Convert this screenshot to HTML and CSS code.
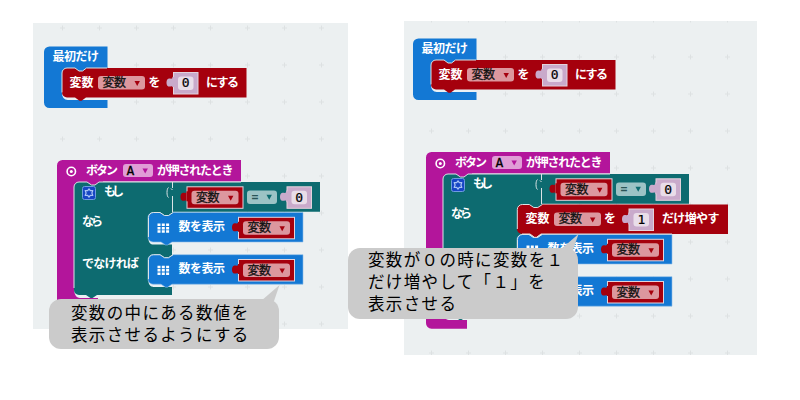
FILE: index.html
```
<!DOCTYPE html>
<html lang="ja">
<head>
<meta charset="utf-8">
<title>micro:bit ブロック</title>
<link rel="stylesheet" href="styles.css">
</head>
<body>
<main class="board">
  <section class="panel panel-before">
    <svg class="canvas" width="315" height="306" viewBox="33 23 315 306">
      <defs>
        <pattern id="grid" x="7" y="9.5" width="37" height="37" patternUnits="userSpaceOnUse">
          <path d="M16 18.500h5M18.500 16v5" class="cross"/>
        </pattern>
        <path id="arrow" d="M0 .5h5.400l-2.700 5z"/>
        <g id="plug"><path d="M7 4v12H6.500c0-3-2-1.500-4-1.500C.5 14.500 0 12 0 10.500S.5 6.500 2.500 6.500c2 0 4 1 4-2.500z"/></g>
        <g id="number">
          <use href="#plug" x="0" y="0" class="lilac"/>
          <rect x="7" y=".5" width="24.500" height="21.500" class="lilac edge"/>
          <rect x="6" y="5" width="2" height="10" class="lilac"/>
          <rect x="11.500" y="4.500" width="15.500" height="13.500" rx="3" class="numfield"/>
        </g>
        <g id="variable">
          <use href="#plug" class="red"/>
          <rect x="6.500" y=".5" width="56" height="21.500" class="red edge"/>
          <rect x="6" y="5" width="2" height="10" class="red"/>
          <rect x="11" y="4.500" width="47" height="13.500" rx="3" class="redfield"/>
          <text x="15.500" y="15.500" textLength="23.500" class="dark">変数</text>
          <use href="#arrow" x="47.500" y="9" class="redmark"/>
        </g>
        <g id="show">
          <path d="M148.500 219v20c0 3.500 2 5.500 5 5.500h18.500v-3z" class="light"/>
          <path d="M153 212.500h7l4.500 3h4l4.500-3H303V242H172l-4.500 3h-2l-4.500-3h-8a5 5 0 0 1-5-5v-19.500a5 5 0 0 1 5-5z" class="blue edgeblue"/>
          <path d="M148.500 237v-19.500a5 5 0 0 1 5-5h6.500l4.500 3h4l4.500-3" class="shine"/>
          <path d="M157.500 223.500h3v2.500h-3zm4.300 0h3v2.500h-3zm4.300 0h3v2.500h-3zm-8.600 3.400h3v2.500h-3zm4.300 0h3v2.500h-3zm4.300 0h3v2.500h-3zm-8.600 3.400h3v2.500h-3zm4.300 0h3v2.500h-3zm4.300 0h3v2.500h-3z" class="white"/>
          <text x="178.500" y="231" textLength="46.500">数を表示</text>
          <use href="#variable" x="232" y="216.800"/>
        </g>
        <g id="start">
          <path d="M64 95v5.500h43.500V96z" class="light"/>
          <path d="M49.500 46.500h58V74H66v21c0 3 1 5 4 5h37.500v8h-58a5.500 5.500 0 0 1-5.500-5.500V52a5.500 5.500 0 0 1 5.500-5.500z" class="blue"/>
          <text x="52.500" y="61" textLength="46.500">最初だけ</text>
          <path d="M62 73v20c0 4 2 7 6 7h39.500v-4z" class="light"/>
          <path d="M67 68h8l4 3h3.500l4-3H246.500v29.500H86l-4.500 3.300h-2L75 97.500h-8a5 5 0 0 1-5-5V73a5 5 0 0 1 5-5z" class="red"/>
          <path d="M62 92.500V73a5 5 0 0 1 5-5h8l4 3h3.500l4-3H107" class="shine"/>
          <text x="69.500" y="87" textLength="24">変数</text>
          <rect x="98" y="76" width="47" height="13.500" rx="3" class="redfield"/>
          <text x="102.500" y="86.800" textLength="23.500" class="dark">変数</text>
          <use href="#arrow" x="134.500" y="80.500" class="redmark"/>
          <text x="148.500" y="87">を</text>
          <use href="#number" x="166.500" y="72"/>
          <text x="181.700" y="87.200" class="digit">0</text>
          <text x="206" y="87" textLength="33">にする</text>
        </g>
        <g id="head">
          <path d="M62.500 160H241v21.500H103V187H78V305H57V165.500a5.500 5.500 0 0 1 5.500-5.500z" class="magenta"/>
          <circle cx="71.300" cy="171.500" r="4.200" class="ring"/>
          <circle cx="71.300" cy="171.500" r="1.500" class="white"/>
          <text x="86" y="174.500" textLength="32">ボタン</text>
          <rect x="123" y="164" width="30" height="13" rx="3" class="pinkfield"/>
          <text x="126.500" y="174.800" class="letter">A</text>
          <use href="#arrow" x="142.500" y="168" class="magenta"/>
          <text x="157" y="174.500" textLength="76.500">が押されたとき</text>
        </g>
        <g id="condition">
          <path d="M74 288V187a5 5 0 0 1 5-5h8l4.500 3h3.500l4-3H241" class="shine"/>
          <rect x="82.500" y="186.500" width="13" height="13" rx="2" class="gearbox"/>
          <path d="M89 188.800l1.300 1.900 2.500-.2-.9 2.500.9 2.500-2.500-.2L89 197.200l-1.300-1.900-2.500.2.900-2.500-.9-2.500 2.500.2z" class="gear"/>
          <text x="104" y="196.300" textLength="20">もし</text>
          <path d="M168.500 187.500c-2 1-2 9 0 10M172.500 182v6M172.500 190l-1.500-1.500M172.500 196v16" class="shine"/>
          <use href="#variable" x="180.500" y="186.300"/>
          <rect x="247" y="190.500" width="30" height="13.500" rx="3" class="tealfield"/>
          <text x="251.500" y="201" class="operator">=</text>
          <use href="#arrow" x="266.500" y="194.200" class="teal"/>
          <use href="#number" x="280" y="186.300"/>
          <text x="295.300" y="201.500" class="digit">0</text>
          <text x="82" y="226" textLength="21">なら</text>
        </g>
      </defs>
      <rect x="33" y="23" width="315" height="306" fill="url(#grid)"/>
      <use href="#start"/>
      <use href="#head"/>
      <path d="M57 296h41v10.700H62.500A5.500 5.500 0 0 1 57 301z" class="magenta"/>
      <path d="M74 288c0 6 2 10 6 10h18v-4z" class="light"/>
      <path d="M79 182h8l4.500 3H95l4-3H320v29.700H173V217h-20V244h19v16h-19v27h19v8H97l-4.500 3h-2L86 295h-7a5 5 0 0 1-5-5V187a5 5 0 0 1 5-5z" class="teal"/>
      <use href="#condition"/>
      <text x="82" y="268" textLength="57">でなければ</text>
      <use href="#show"/>
      <use href="#show" y="42.200"/>
    </svg>
    <div class="callout callout-before">変数の中にある数値を<br>表示させるようにする
      <svg class="tail" width="20" height="16" viewBox="0 0 20 16"><path d="M0 16L18.500 0 13 16z"/></svg>
    </div>
  </section>

  <section class="panel panel-after">
    <svg class="canvas" width="353" height="334" viewBox="35 29 353 334">
      <rect x="35" y="29" width="353" height="334" fill="url(#grid)"/>
      <use href="#start"/>
      <use href="#head"/>
      <path d="M57 300h21v27h20v9.700H62.500A5.500 5.500 0 0 1 57 331z" class="magenta"/>
      <path d="M74 318c0 6 2 10 6 10h18v-4z" class="light"/>
      <path d="M79 182h8l4.500 3H95l4-3H320v29.700H173V217h-20V274h19v16h-19v27h19v8H97l-4.500 3h-2L86 325h-7a5 5 0 0 1-5-5V187a5 5 0 0 1 5-5z" class="teal"/>
      <use href="#condition"/>
      <use href="#show" y="30"/>
      <use href="#show" y="72.200"/>
      <path d="M153 212.500h7l4.500 3h4l4.500-3H359V242H172l-4.500 3.300h-2L161 242h-8a5 5 0 0 1-5-5v-19.500a5 5 0 0 1 5-5z" class="red"/>
      <path d="M148.300 237v-19.500a5 5 0 0 1 5-5h7l4.500 3h4l4.500-3M153 242h8l4.500 3.300h2l4.500-3.300H303" class="shine"/>
      <text x="156.500" y="231" textLength="24">変数</text>
      <rect x="185" y="220.500" width="47" height="13.500" rx="3" class="redfield"/>
      <text x="189.500" y="231.300" textLength="23.500" class="dark">変数</text>
      <use href="#arrow" x="221" y="225" class="redmark"/>
      <text x="235" y="231">を</text>
      <use href="#number" x="253" y="216.500"/>
      <text x="268.500" y="231.700" class="digit">1</text>
      <text x="293" y="231" textLength="57.500">だけ増やす</text>
    </svg>
    <div class="callout callout-after">変数が０の時に変数を１<br>だけ増やして「１」を<br>表示させる
      <svg class="tail" width="20" height="16" viewBox="0 0 20 16"><path d="M0 16L18.500 0 13 16z"/></svg>
    </div>
  </section>
</main>
</body>
</html>
```
FILE: styles.css
```
* { box-sizing: border-box; }
body {
  margin: 0;
  width: 800px;
  height: 400px;
  overflow: hidden;
  background: #fff;
  font-family: "Noto Sans CJK JP", sans-serif;
}
.board {
  display: flex;
  align-items: flex-start;
  gap: 56px;
  padding: 21px 0 0 33px;
}
.panel {
  position: relative;
  flex: none;
  background: #ecf0f1;
}
.panel-before { width: 315px; height: 306px; margin-top: 2px; }
.panel-after { width: 353px; height: 334px; }
.canvas { display: block; }
.canvas text {
  font-size: 12px;
  font-weight: 700;
  fill: #fff;
}
.canvas text.dark {
  fill: #111;
  font-weight: 400;
  stroke: #111;
  stroke-width: .3px;
}
.canvas text.digit {
  font-family: "DejaVu Sans Mono", monospace;
  font-size: 13px;
  font-weight: 400;
  fill: #000;
  stroke: #000;
  stroke-width: .2px;
}
.canvas text.letter {
  font-family: "DejaVu Sans Mono", monospace;
  font-size: 13px;
  font-weight: 400;
  fill: #000;
  stroke: #000;
  stroke-width: .3px;
}
.canvas text.operator {
  font-family: "DejaVu Sans Mono", monospace;
  font-size: 11.5px;
  font-weight: 700;
  fill: #2a5557;
}
.cross { stroke: #dde1e2; stroke-width: 1; fill: none; }
.blue { fill: #1378d4; }
.red { fill: #a5000d; }
.magenta { fill: #b3159b; }
.teal { fill: #0d6b70; }
.lilac { fill: #c9aacb; }
.white { fill: #fff; }
.light { fill: #eaf0f4; }
.edge { stroke: #e3d3dc; stroke-width: 1; }
.edgeblue { stroke: #8dbde8; stroke-width: .6; }
.shine { fill: none; stroke: #dce4e6; stroke-width: 1; }
.numfield { fill: #e9dde9; }
.redfield { fill: #dc979e; }
.redmark { fill: #a5000d; }
.pinkfield { fill: #e09dd6; }
.tealfield { fill: #9cc3c5; }
.ring { fill: none; stroke: #fff; stroke-width: 1.6; }
.gearbox { fill: #1746c4; stroke: #6f9ce0; }
.gear { fill: none; stroke: #a9c4f4; stroke-width: 1.2; stroke-linejoin: round; }
.callout {
  position: absolute;
  width: 230px;
  border-radius: 12px;
  background: #cbcbcb;
  color: #000;
  font-size: 16.5px;
  line-height: 22px;
  letter-spacing: 1.35px;
  white-space: nowrap;
}
.callout-before { left: 16px; top: 276px; height: 50px; padding: 2px 0 0 22px; }
.callout-after { left: -56px; top: 227px; height: 71px; padding: 0 0 0 20px; }
.tail { position: absolute; left: 212px; top: -14px; fill: #cbcbcb; }
```
